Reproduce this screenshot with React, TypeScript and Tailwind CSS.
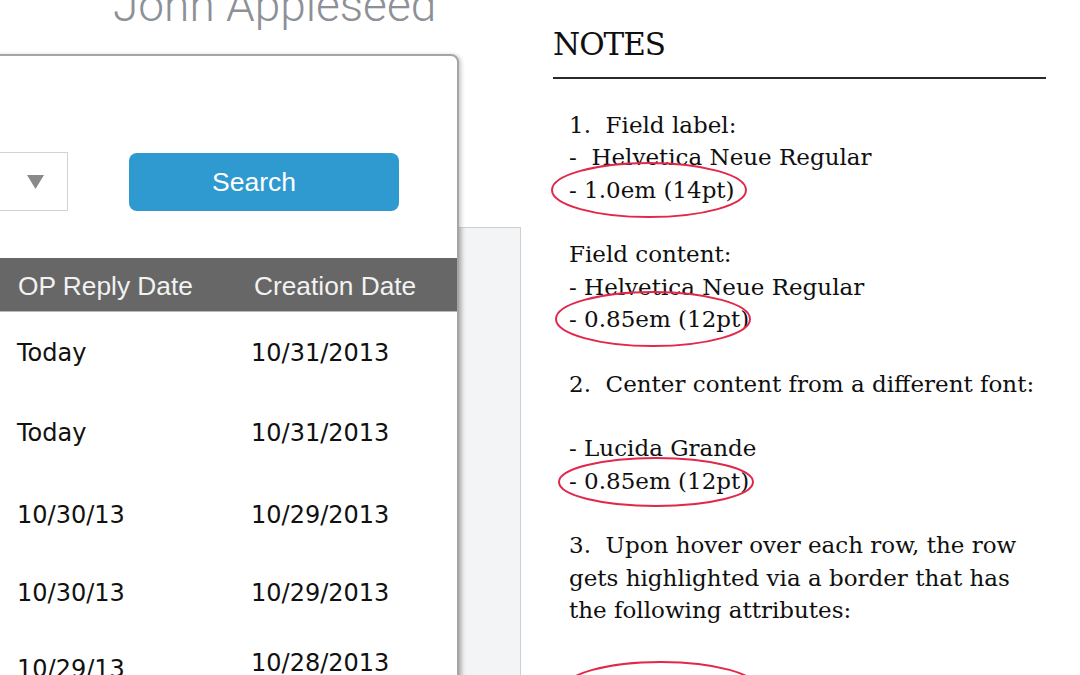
import React from "react";

const rows = [
  { a: "Today", b: "10/31/2013", h: "h-[82px]", off: "" },
  { a: "Today", b: "10/31/2013", h: "h-[78px]", off: "" },
  { a: "10/30/13", b: "10/29/2013", h: "h-[86px]", off: "" },
  { a: "10/30/13", b: "10/29/2013", h: "h-[70px]", off: "" },
  { a: "10/29/13", b: "10/28/2013", h: "h-[70px]", off: "pt-[12px]" },
];

const notes: string[] = [
  "1.  Field label:",
  "-  Helvetica Neue Regular",
  "- 1.0em (14pt)",
  "",
  "Field content:",
  "- Helvetica Neue Regular",
  "- 0.85em (12pt)",
  "",
  "2.  Center content from a different font:",
  "",
  "- Lucida Grande",
  "- 0.85em (12pt)",
  "",
  "3.  Upon hover over each row, the row",
  "gets highlighted via a border that has",
  "the following attributes:",
];

export default function App() {
  return (
    <div className="w-[1080px] h-[675px] overflow-hidden bg-white flex">
      {/* Left: mock UI */}
      <div className="w-[553px] shrink-0 flex flex-col">
        <div className="h-[54px] shrink-0 pl-[113px]">
          <div className="mt-[-18px] text-[46px] leading-[46px] font-light text-[#8d9096] font-['Roboto',sans-serif] whitespace-nowrap">
            John Appleseed
          </div>
        </div>
        <div className="flex flex-1 min-h-0">
          <div className="ml-[-200px] w-[659px] h-[720px] shrink-0 border-2 border-[#a5a5a5] rounded-tr-[8px] bg-white shadow-[2px_1px_4px_rgba(0,0,0,0.22)] flex flex-col relative z-10">
            <div className="h-[96px] shrink-0" />
            <div className="flex justify-end items-start pr-[58px] gap-[61px]">
              <div className="w-[167px] h-[59px] border border-[#d2d2d2] flex items-center justify-end pr-[23px]">
                <svg width="17" height="14" viewBox="0 0 17 14">
                  <polygon points="0,0 17,0 8.5,14" fill="#8a8a8a" />
                </svg>
              </div>
              <button className="mt-[1px] w-[270px] h-[58px] rounded-[8px] bg-[#2f9ad0] text-white text-[26.5px] font-['Liberation_Sans',Arial,sans-serif] flex items-center justify-center pr-[20px] pt-[2px]">
                Search
              </button>
            </div>
            <div className="mt-[47px] h-[54px] bg-[#676767] border-b border-[#b8b8b8] grid grid-cols-[236px_1fr] items-center pl-[216px] pt-[4px] text-[26.3px] text-[#f2f2f2] font-['Liberation_Sans',Arial,sans-serif] whitespace-nowrap">
              <div>OP Reply Date</div>
              <div>Creation Date</div>
            </div>
            {rows.map((r, i) => (
              <div
                key={i}
                className={`${r.h} grid grid-cols-[233px_1fr] items-center pl-[215px] text-[24px] text-[#111] font-['DejaVu_Sans',sans-serif] whitespace-nowrap`}
              >
                <div className={r.off}>{r.a}</div>
                <div className="pl-[1px]">{r.b}</div>
              </div>
            ))}
          </div>
          <div className="mt-[173px] w-[62px] shrink-0 bg-[#f3f4f6] border-t border-r border-[#cfcfcf] shadow-[inset_7px_0_6px_-5px_rgba(0,0,0,0.15)]" />
        </div>
      </div>

      {/* Right: notes */}
      <div className="w-[493px] shrink-0 relative font-['DejaVu_Serif',serif] text-[#0f0f0f]">
        <div className="pt-[27px] text-[31px] leading-[34px] tracking-[-1px] whitespace-nowrap">NOTES</div>
        <div className="mt-[16px] h-[2px] bg-[#2a2a2a]" />
        <div className="mt-[30px] pl-[16px] text-[23px] leading-[32.33px] whitespace-pre">
          {notes.map((n, i) => (
            <div key={i} className="h-[32.33px]">
              {n}
            </div>
          ))}
        </div>
        <svg
          className="absolute left-0 top-0 overflow-visible pointer-events-none"
          width="493"
          height="675"
          viewBox="0 0 493 675"
        >
          <g fill="none" stroke="#e2274b" strokeWidth="2">
            <ellipse cx="96" cy="190" rx="97" ry="27" />
            <ellipse cx="100" cy="319" rx="97" ry="27" />
            <ellipse cx="103" cy="482" rx="97" ry="24" />
            <ellipse cx="108" cy="689" rx="97" ry="27" />
          </g>
        </svg>
      </div>
    </div>
  );
}
